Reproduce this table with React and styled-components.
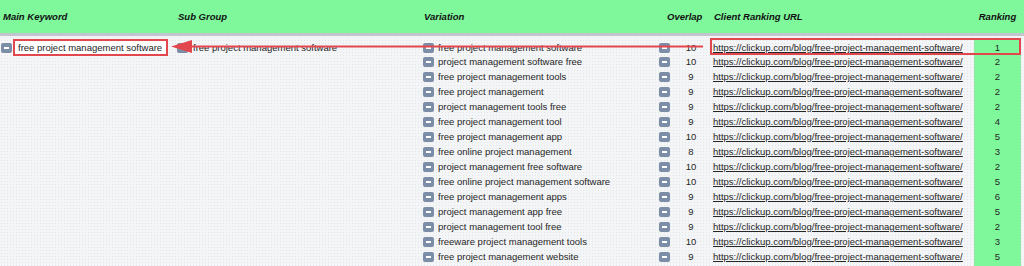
import React from 'react';
import styled, { createGlobalStyle } from 'styled-components';

const GlobalStyle = createGlobalStyle`
  body {
    margin: 0;
    background: #f4f5f7;
    font-family: "Liberation Sans", Arial, sans-serif;
  }
`;

const RED = '#e2474d';
const COLS = '176px 244px 236px 56px 262px 47px 3px';

const rows = [
  ['free project management software', 10, 1],
  ['project management software free', 10, 2],
  ['free project management tools', 9, 2],
  ['free project management', 9, 2],
  ['project management tools free', 9, 2],
  ['free project management tool', 9, 4],
  ['free project management app', 10, 5],
  ['free online project management', 8, 3],
  ['project management free software', 10, 2],
  ['free online project management software', 10, 5],
  ['free project management apps', 9, 6],
  ['project management app free', 9, 5],
  ['project management tool free', 9, 2],
  ['freeware project management tools', 10, 3],
  ['free project management website', 9, 5],
  // last row only peeks in at the bottom edge
  ['', '', ''],
];

const URL = 'https://clickup.com/blog/free-project-management-software/';

const Page = styled.div`
  position: relative;
  width: 1024px;
  height: 266px;
  overflow: hidden;
  background-color: #f4f5f7;
  background-image: radial-gradient(#e3e5e9 0.7px, transparent 0.8px);
  background-size: 3px 3px;
  color: #262626;
  font-size: 9.5px;
`;

const Header = styled.div`
  display: grid;
  grid-template-columns: ${COLS};
  height: 33px;
  align-items: center;
  background: #7ff89c;
  border-bottom: 3px solid #c2c5ce;
`;

const HeadCell = styled.div`
  font-weight: bold;
  font-style: italic;
  color: #111;
  padding-left: ${p => p.$pad || 0}px;
  text-align: ${p => (p.$center ? 'center' : 'left')};
  white-space: nowrap;
`;

const Body = styled.div`
  padding-top: 3px;
`;

const Row = styled.div`
  display: grid;
  grid-template-columns: ${COLS};
  height: 15px;
  align-items: center;
`;

const Cell = styled.div`
  display: flex;
  align-items: center;
  height: 100%;
  padding-left: ${p => p.$pad || 0}px;
  gap: ${p => p.$gap ?? 4}px;
  white-space: nowrap;
`;

const Minus = styled.span`
  flex: none;
  position: relative;
  width: 11px;
  height: 10px;
  border-radius: 2px;
  background: #7c8da7;
  &::after {
    content: '';
    position: absolute;
    left: 3px;
    right: 3px;
    top: 4px;
    height: 2px;
    background: #fff;
  }
`;

const KeywordBox = styled.span`
  display: inline-flex;
  align-items: center;
  box-sizing: border-box;
  height: 17px;
  margin-left: 1px;
  padding: 0 4px 0 3px;
  border: 2px solid ${RED};
  background: #fff;
`;

const Num = styled.span`
  width: 42px;
  text-align: center;
`;

const Link = styled.a`
  color: #262626;
  text-decoration: underline;
`;

const RankCell = styled.div`
  height: 100%;
  display: flex;
  align-items: center;
  justify-content: center;
  background: #7ff89c;
  border-left: 1px dotted #a8dcb4;
  border-right: 1px dotted #a8dcb4;
`;

const Overlay = styled.svg`
  position: absolute;
  left: 0;
  top: 0;
  pointer-events: none;
`;

export default function App() {
  return (
    <>
      <GlobalStyle />
      <Page>
        <Header>
          <HeadCell $pad={3}>Main Keyword</HeadCell>
          <HeadCell $pad={2}>Sub Group</HeadCell>
          <HeadCell $pad={4}>Variation</HeadCell>
          <HeadCell $pad={11}>Overlap</HeadCell>
          <HeadCell $pad={2}>Client Ranking URL</HeadCell>
          <HeadCell $center>Ranking</HeadCell>
          <div />
        </Header>
        <Body>
          {rows.map(([variation, overlap, rank], i) => (
            <Row key={i}>
              {i === 0 ? (
                <Cell $pad={1} $gap={0}>
                  <Minus />
                  <KeywordBox>free project management software</KeywordBox>
                </Cell>
              ) : <div />}
              {i === 0 ? (
                <Cell $pad={1} $gap={5}>
                  <Minus />
                  <span>free project management software</span>
                </Cell>
              ) : <div />}
              <Cell $pad={3}>
                <Minus />
                {variation && <span>{variation}</span>}
              </Cell>
              <Cell $pad={3} $gap={0}>
                <Minus />
                <Num>{overlap}</Num>
              </Cell>
              <Cell $pad={1}>
                {variation && <Link href="#">{URL}</Link>}
              </Cell>
              <RankCell>{rank}</RankCell>
              <div />
            </Row>
          ))}
        </Body>
        <Overlay width="1024" height="266" viewBox="0 0 1024 266">
          <line x1="188" y1="46.5" x2="703" y2="46.5" stroke={RED} strokeWidth="2" />
          <polygon points="171,46.5 192,40 192,53" fill={RED} />
          <rect x="711" y="39" width="309" height="15" fill="none" stroke={RED} strokeWidth="2" />
        </Overlay>
      </Page>
    </>
  );
}
